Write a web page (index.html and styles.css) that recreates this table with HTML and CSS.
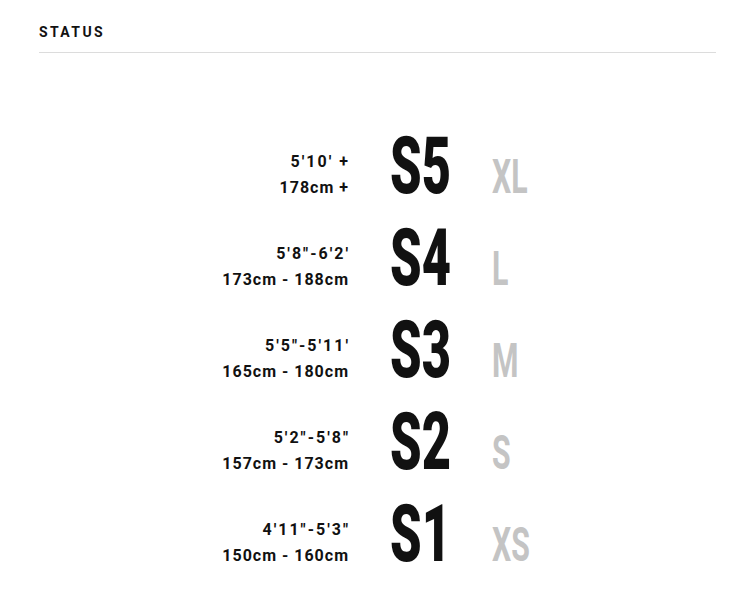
FILE: index.html
```html
<!DOCTYPE html>
<html>
<head>
<meta charset="utf-8">
<link rel="stylesheet" href="styles.css">
</head>
<body>
<div class="page">
  <div class="header"><span class="title">STATUS</span></div>
  <div class="chart">
    <div class="row">
      <div class="range"><div class="imp">5'10' +</div><div>178cm +</div></div>
      <div class="code"><span>S5</span></div>
      <div class="size"><span>XL</span></div>
    </div>
    <div class="row">
      <div class="range"><div class="imp">5'8"-6'2'</div><div>173cm - 188cm</div></div>
      <div class="code"><span>S4</span></div>
      <div class="size"><span>L</span></div>
    </div>
    <div class="row">
      <div class="range"><div class="imp">5'5"-5'11'</div><div>165cm - 180cm</div></div>
      <div class="code"><span>S3</span></div>
      <div class="size"><span>M</span></div>
    </div>
    <div class="row">
      <div class="range"><div class="imp">5'2"-5'8"</div><div>157cm - 173cm</div></div>
      <div class="code"><span>S2</span></div>
      <div class="size"><span>S</span></div>
    </div>
    <div class="row">
      <div class="range"><div class="imp">4'11"-5'3"</div><div>150cm - 160cm</div></div>
      <div class="code"><span>S1</span></div>
      <div class="size"><span>XS</span></div>
    </div>
  </div>
</div>
</body>
</html>
```

FILE: styles.css
```css
html, body {
  margin: 0;
  padding: 0;
  background: #fff;
}
body {
  font-family: Roboto, "Liberation Sans", sans-serif;
  color: #111;
}
.page {
  padding: 0 37px 0 39px;
}
.header {
  padding-top: 22px;
  padding-bottom: 10px;
  border-bottom: 1px solid #dcdcdc;
  line-height: 20px;
}
.title {
  font-size: 14px;
  font-weight: 700;
  letter-spacing: 2.4px;
}
.chart {
  padding-top: 67px;
  display: flex;
  flex-direction: column;
}
.row {
  display: grid;
  grid-template-columns: 309px 144px 100px;
  align-items: last baseline;
  height: 92px;
}
.range {
  text-align: right;
  font-size: 16px;
  font-weight: 700;
  letter-spacing: 1px;
  line-height: 26px;
  margin-right: -1px;
}
.range .imp {
  letter-spacing: 2px;
  margin-right: -1px;
}
.code {
  padding-left: 42px;
  font-size: 79px;
  font-weight: 900;
  line-height: 92px;
}
.code span {
  display: inline-block;
  transform: scaleX(0.64);
  transform-origin: left;
}
.size {
  font-size: 48px;
  font-weight: 700;
  color: #c4c4c4;
  line-height: 60px;
}
.size span {
  display: inline-block;
  transform: scaleX(0.63);
  transform-origin: left;
}
```
